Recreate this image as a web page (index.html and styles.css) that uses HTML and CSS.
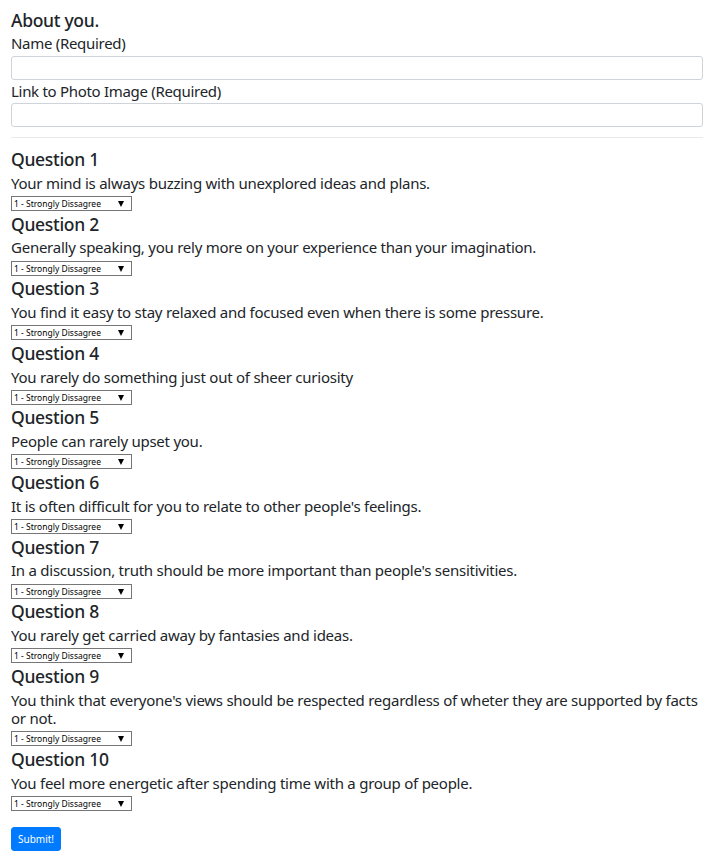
FILE: index.html
```html
<!DOCTYPE html>
<html lang="en">
<head>
<meta charset="utf-8">
<title>About you</title>
<link rel="stylesheet" href="styles.css">
</head>
<body>
<form class="page">
  <h5 class="title">About you.</h5>
  <label class="label" for="name">Name (Required)</label>
  <input class="field" id="name" type="text">
  <label class="label" for="photo">Link to Photo Image (Required)</label>
  <input class="field" id="photo" type="text">
  <hr class="rule">

  <div class="question">
    <h5 class="q-title">Question 1</h5>
    <p class="q-text">Your mind is always buzzing with unexplored ideas and plans.</p>
    <div class="pick"><select class="select"><option>1 - Strongly Dissagree</option></select><span class="arrow"></span></div>
  </div>
  <div class="question">
    <h5 class="q-title">Question 2</h5>
    <p class="q-text">Generally speaking, you rely more on your experience than your imagination.</p>
    <div class="pick"><select class="select"><option>1 - Strongly Dissagree</option></select><span class="arrow"></span></div>
  </div>
  <div class="question">
    <h5 class="q-title">Question 3</h5>
    <p class="q-text">You find it easy to stay relaxed and focused even when there is some pressure.</p>
    <div class="pick"><select class="select"><option>1 - Strongly Dissagree</option></select><span class="arrow"></span></div>
  </div>
  <div class="question">
    <h5 class="q-title">Question 4</h5>
    <p class="q-text">You rarely do something just out of sheer curiosity</p>
    <div class="pick"><select class="select"><option>1 - Strongly Dissagree</option></select><span class="arrow"></span></div>
  </div>
  <div class="question">
    <h5 class="q-title">Question 5</h5>
    <p class="q-text">People can rarely upset you.</p>
    <div class="pick"><select class="select"><option>1 - Strongly Dissagree</option></select><span class="arrow"></span></div>
  </div>
  <div class="question">
    <h5 class="q-title">Question 6</h5>
    <p class="q-text">It is often difficult for you to relate to other people's feelings.</p>
    <div class="pick"><select class="select"><option>1 - Strongly Dissagree</option></select><span class="arrow"></span></div>
  </div>
  <div class="question">
    <h5 class="q-title">Question 7</h5>
    <p class="q-text">In a discussion, truth should be more important than people's sensitivities.</p>
    <div class="pick"><select class="select"><option>1 - Strongly Dissagree</option></select><span class="arrow"></span></div>
  </div>
  <div class="question">
    <h5 class="q-title">Question 8</h5>
    <p class="q-text">You rarely get carried away by fantasies and ideas.</p>
    <div class="pick"><select class="select"><option>1 - Strongly Dissagree</option></select><span class="arrow"></span></div>
  </div>
  <div class="question">
    <h5 class="q-title">Question 9</h5>
    <p class="q-text">You think that everyone's views should be respected regardless of wheter they are supported by facts or not.</p>
    <div class="pick"><select class="select"><option>1 - Strongly Dissagree</option></select><span class="arrow"></span></div>
  </div>
  <div class="question">
    <h5 class="q-title">Question 10</h5>
    <p class="q-text">You feel more energetic after spending time with a group of people.</p>
    <div class="pick"><select class="select"><option>1 - Strongly Dissagree</option></select><span class="arrow"></span></div>
  </div>

  <button class="submit" type="button">Submit!</button>
</form>
</body>
</html>
```

FILE: styles.css
```css
html, body {
  margin: 0;
  padding: 0;
  background: #fff;
}
body {
  font-family: "Noto Sans", "Open Sans", sans-serif;
  color: #212529;
  font-size: 15px;
  line-height: 24px;
}
.page {
  padding: 8px 7px 0 11px;
  display: flex;
  flex-direction: column;
}
.title, .q-title {
  margin: 0;
  font-size: 17.5px;
  line-height: 24px;
  font-weight: 500;
  letter-spacing: -0.3px;
}
.label {
  display: block;
  font-size: 15px;
  line-height: 23.5px;
  letter-spacing: -0.3px;
}
.field {
  box-sizing: border-box;
  display: block;
  width: 100%;
  height: 24px;
  margin: 0;
  border: 1px solid #ced4da;
  border-radius: 3px;
  background: #fff;
}
.rule {
  width: 100%;
  margin: 10px 0 9px;
  border: 0;
  border-top: 1px solid #eaeaea;
}
.question {
  display: flex;
  flex-direction: column;
}
.q-text {
  margin: 0;
  padding: 2.75px 0;
  font-size: 15px;
  line-height: 18.5px;
  letter-spacing: -0.25px;
}
.pick {
  position: relative;
  display: flex;
  height: 16.6px;
}
.select {
  appearance: none;
  -webkit-appearance: none;
  box-sizing: border-box;
  display: block;
  width: 121px;
  height: 15px;
  margin: 1px 0 0;
  padding: 0 0 0 2px;
  border: 1px solid #767676;
  border-radius: 0;
  background: #fff;
  color: #000;
  font-family: "Noto Sans", "Open Sans", sans-serif;
  font-size: 8.5px;
  line-height: 13px;
}
.arrow {
  position: absolute;
  left: 107px;
  top: 6px;
  width: 0;
  height: 0;
  border-left: 3.5px solid transparent;
  border-right: 3.5px solid transparent;
  border-top: 6px solid #000;
  pointer-events: none;
}
.submit {
  align-self: flex-start;
  margin-top: 16px;
  width: 50px;
  height: 24px;
  padding: 0;
  border: 1px solid #007bff;
  border-radius: 3px;
  background: #007bff;
  color: #fff;
  font-family: "Noto Sans", "Open Sans", sans-serif;
  font-size: 10px;
  line-height: 22px;
}
```
